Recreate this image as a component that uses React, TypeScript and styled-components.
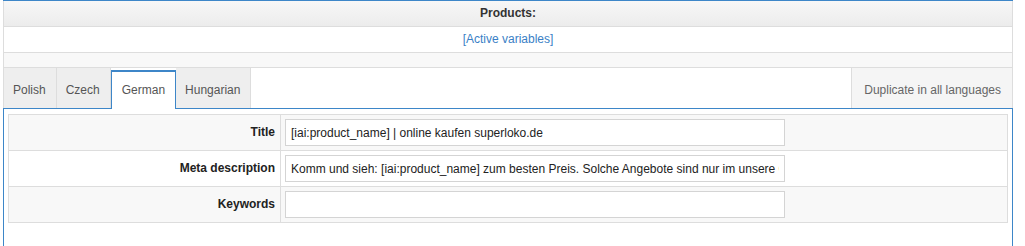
import styled, { createGlobalStyle } from "styled-components";

const GlobalStyle = createGlobalStyle`
  body {
    margin: 0;
    background: #fff;
    font-family: "Liberation Sans", Arial, sans-serif;
    font-size: 12px;
    color: #333;
  }
`;

const LANGUAGES = ["Polish", "Czech", "German", "Hungarian"];
const ACTIVE_LANGUAGE = "German";

interface FieldRow {
  label: string;
  value: string;
}

const FIELDS: FieldRow[] = [
  { label: "Title", value: "[iai:product_name] | online kaufen superloko.de" },
  {
    label: "Meta description",
    value:
      "Komm und sieh: [iai:product_name] zum besten Preis. Solche Angebote sind nur im unsere Geschäft!",
  },
  { label: "Keywords", value: "" },
];

const App = () => {
  return (
    <>
      <GlobalStyle />
      <S.Panel>
        <S.Header>Products:</S.Header>
        <S.VariablesRow>
          <S.Link href="#">[Active variables]</S.Link>
        </S.VariablesRow>
        <S.Spacer />
        <S.TabBar>
          {LANGUAGES.map((lang) => (
            <S.Tab key={lang} $active={lang === ACTIVE_LANGUAGE}>
              {lang}
            </S.Tab>
          ))}
          <S.DuplicateButton>Duplicate in all languages</S.DuplicateButton>
        </S.TabBar>
        <S.TabContent>
          <S.Table>
            <tbody>
              {FIELDS.map((field, index) => (
                <S.Row key={field.label} $striped={index % 2 === 0}>
                  <S.LabelCell>{field.label}</S.LabelCell>
                  <S.ValueCell>
                    <S.Input type="text" defaultValue={field.value} />
                  </S.ValueCell>
                </S.Row>
              ))}
            </tbody>
          </S.Table>
        </S.TabContent>
      </S.Panel>
    </>
  );
};

export default App;

const BLUE = "#3d86c8";
const LINE = "#dddddd";

const S = {
  Panel: styled.section`
    box-sizing: border-box;
    width: 1010px;
    margin-left: 3px;
    border-top: 1px solid ${BLUE};
  `,

  Header: styled.div`
    height: 25px;
    line-height: 25px;
    text-align: center;
    font-weight: bold;
    color: #333;
    background: linear-gradient(#f7f7f7, #ececec);
    border-left: 1px solid ${LINE};
    border-right: 1px solid ${LINE};
    border-bottom: 1px solid ${LINE};
  `,

  VariablesRow: styled.div`
    height: 25px;
    line-height: 25px;
    text-align: center;
    background: #fff;
    border-left: 1px solid ${LINE};
    border-right: 1px solid ${LINE};
    border-bottom: 1px solid ${LINE};
  `,

  Link: styled.a`
    color: #3a7fc6;
    text-decoration: none;
  `,

  Spacer: styled.div`
    height: 14px;
    background: #f8f8f8;
    border-left: 1px solid ${LINE};
    border-right: 1px solid ${LINE};
    border-bottom: 1px solid ${LINE};
  `,

  TabBar: styled.div`
    display: flex;
    align-items: flex-end;
    height: 40px;
    border-left: 1px solid ${LINE};
    border-right: 1px solid ${LINE};
  `,

  Tab: styled.div<{ $active: boolean }>`
    box-sizing: border-box;
    display: flex;
    align-items: center;
    justify-content: center;
    padding: 4px 10px 0 9px;
    color: #555;
    cursor: pointer;
    ${({ $active }) =>
      $active
        ? `
      position: relative;
      z-index: 1;
      height: 39px;
      margin-bottom: -1px;
      padding: 0 10px 1px 10px;
      background: #fff;
      border: 1px solid ${BLUE};
      border-top-width: 2px;
      border-bottom: none;
    `
        : `
      height: 40px;
      background: #eeeeee;
      border-right: 1px solid ${LINE};
    `}
  `,

  DuplicateButton: styled.div`
    box-sizing: border-box;
    display: flex;
    align-items: center;
    height: 40px;
    margin-left: auto;
    padding: 4px 11px 0 12px;
    background: #f5f5f5;
    border-left: 1px solid ${LINE};
    color: #666;
    cursor: pointer;
  `,

  TabContent: styled.div`
    box-sizing: border-box;
    height: 140px;
    padding: 5px 4px 0 4px;
    border: 1px solid ${BLUE};
    border-bottom: none;
  `,

  Table: styled.table`
    width: 100%;
    border-collapse: collapse;
    border: 1px solid ${LINE};
  `,

  Row: styled.tr<{ $striped: boolean }>`
    height: 36px;
    background: ${({ $striped }) => ($striped ? "#f8f8f8" : "#fff")};
    border-bottom: 1px solid ${LINE};
  `,

  LabelCell: styled.th`
    box-sizing: border-box;
    width: 272px;
    padding: 0 5px 1px 0;
    text-align: right;
    font-weight: bold;
    color: #222;
    border-right: 1px solid ${LINE};
  `,

  ValueCell: styled.td`
    padding: 0 4px;
  `,

  Input: styled.input`
    box-sizing: border-box;
    display: block;
    width: 500px;
    height: 27px;
    padding: 0 5px;
    border: 1px solid #d4d4d4;
    background: #fff;
    font-family: "Liberation Sans", Arial, sans-serif;
    font-size: 12px;
    color: #222;
    outline: none;
  `,
};
